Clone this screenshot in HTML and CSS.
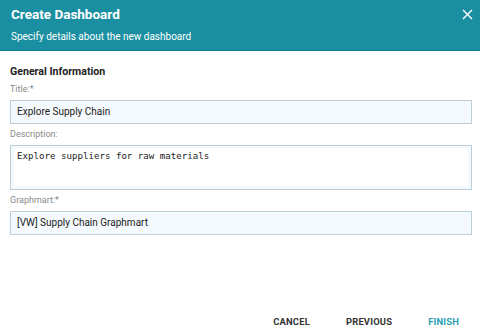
FILE: index.html
```html
<!DOCTYPE html>
<html lang="en">
<head>
	<meta charset="UTF-8">
	<title>Create Dashboard</title>
	<link rel="stylesheet" href="styles.css">
</head>
<body>
	<div class="dialog">
		<div class="header">
			<div class="title">Create Dashboard</div>
			<div class="subtitle">Specify details about the new dashboard</div>
			<span class="close">
				<svg width="11" height="11" viewBox="0 0 11 11"><path d="M1 1L10 10M10 1L1 10" stroke="#fff" stroke-width="1.4"/></svg>
			</span>
		</div>

		<div class="content">
			<div class="section">General Information</div>

			<div class="field">
				<label>Title:*</label>
				<div class="input">Explore Supply Chain</div>
			</div>

			<div class="field">
				<label>Description:</label>
				<div class="area">
					<div class="areaInner">Explore suppliers for raw materials</div>
				</div>
			</div>

			<div class="field">
				<label>Graphmart:*</label>
				<div class="input">[VW] Supply Chain Graphmart</div>
			</div>
		</div>

		<div class="footer">
			<div class="btn">CANCEL</div>
			<div class="btn">PREVIOUS</div>
			<div class="btn finish">FINISH</div>
		</div>
	</div>
</body>
</html>
```

FILE: styles.css
```css
* {
	box-sizing: border-box;
}

body {
	margin: 0;
	font-family: Roboto, "Liberation Sans", sans-serif;
	background: #fff;
}

.dialog {
	display: flex;
	flex-direction: column;
	width: 480px;
	height: 336px;
}

/********** header **********/
.header {
	position: relative;
	height: 51px;
	padding: 5px 11px 0;
	background-color: #1a8fa1;
	border-bottom: 1px solid #127d8b;
	color: #fff;
}
.title {
	font-size: 13.5px;
	font-weight: 700;
	line-height: 18px;
}
.subtitle {
	margin-top: 7px;
	font-size: 10px;
	line-height: 14px;
}
.close {
	position: absolute;
	top: 9px;
	right: 7px;
	line-height: 0;
}

/********** form **********/
.content {
	flex: 1;
	padding: 14px 8px 0 10px;
}
.section {
	font-size: 10.6px;
	font-weight: 700;
	color: #222;
	line-height: 14px;
}
.field {
	margin-top: 5px;
}
.field label {
	display: block;
	font-size: 9px;
	color: #8a8a8a;
	line-height: 11px;
	margin-bottom: 5px;
}
.input {
	height: 24px;
	padding: 0 6px;
	background-color: #f4f9fd;
	border: 1px solid #bccfd9;
	font-size: 10px;
	line-height: 22px;
	color: #222;
}
.area {
	height: 45px;
	padding: 3px;
	background-color: #f4f9fd;
	border: 1px solid #bccfd9;
}
.areaInner {
	height: 100%;
	padding: 1px 3px;
	background-color: #fff;
	font-family: "DejaVu Sans Mono", "Liberation Mono", monospace;
	font-size: 9.15px;
	line-height: 13px;
	color: #222;
}

/********** footer **********/
.footer {
	display: flex;
	justify-content: flex-end;
	padding: 0 3px 4px 0;
}
.btn {
	padding: 4px 18px;
	font-size: 9.4px;
	font-weight: 700;
	letter-spacing: 0.2px;
	color: #333;
	line-height: 12px;
}
.finish {
	color: #2a9db3;
}
```
